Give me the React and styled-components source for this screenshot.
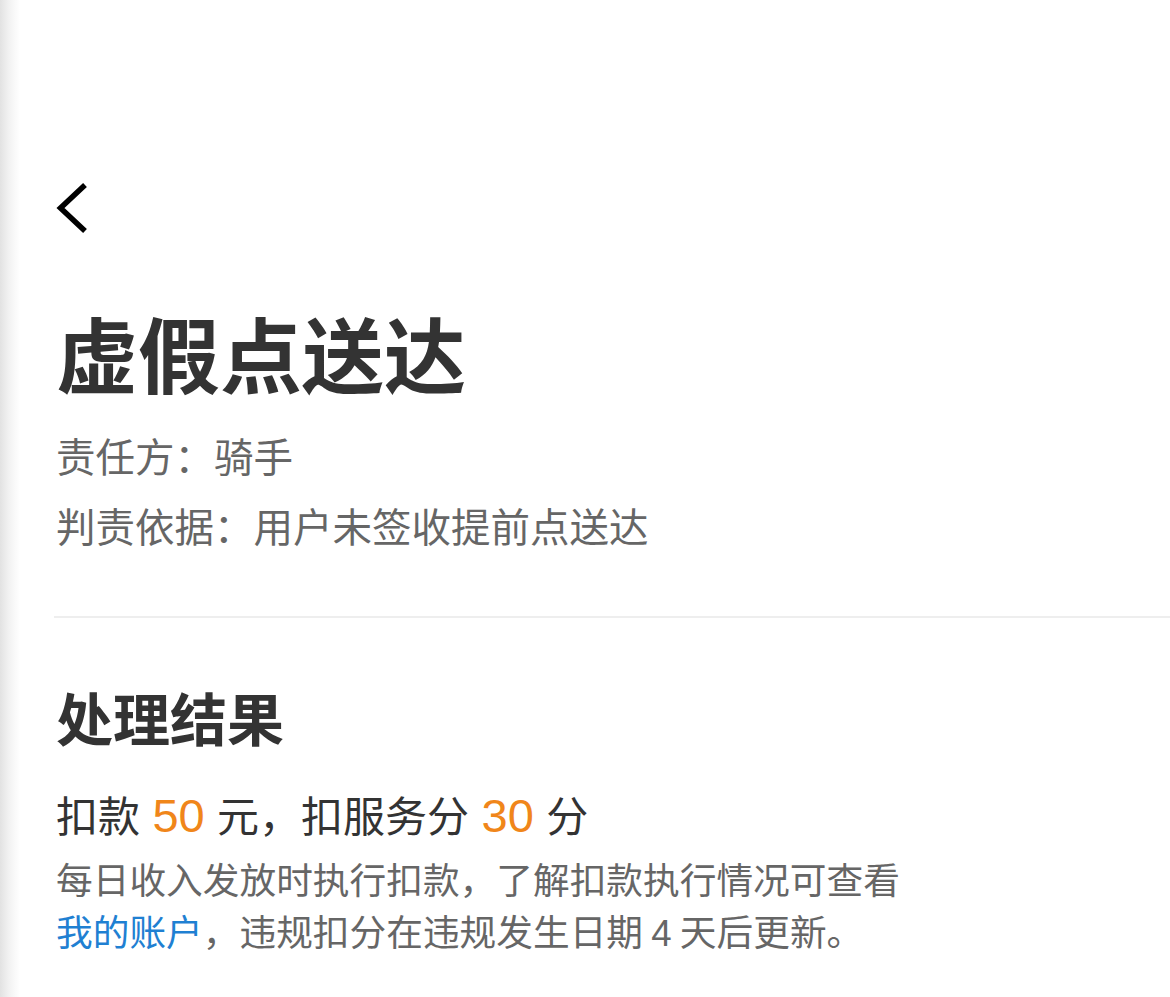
import React from 'react';
import styled, { createGlobalStyle } from 'styled-components';

const GlobalStyle = createGlobalStyle`
  html, body {
    margin: 0;
    padding: 0;
    background: #fff;
  }
  body {
    font-family: "Noto Sans CJK SC", "Noto Sans", sans-serif;
  }
`;

const Page = styled.div`
  width: 1170px;
  min-height: 997px;
  box-sizing: border-box;
  padding: 183px 0 0 56px;
  background: linear-gradient(to right, #e2e2e2 0px, #f2f2f2 9px, #fff 20px);
`;

const BackButton = styled.button`
  display: block;
  width: 32px;
  height: 50px;
  padding: 0;
  border: 0;
  background: none;
  cursor: pointer;
`;

const Title = styled.h1`
  margin: 78px 0 0;
  font-size: 82px;
  line-height: 82px;
  font-weight: 700;
  color: #333;
`;

const InfoList = styled.div`
  margin-top: 38px;
  display: flex;
  flex-direction: column;
  gap: 22px;
`;

const InfoRow = styled.div`
  font-size: 39.5px;
  line-height: 48px;
  color: #666;
`;

const Divider = styled.hr`
  margin: 67px 0 0 -2px;
  border: 0;
  height: 2px;
  background: #eeeeee;
`;

const SectionTitle = styled.h2`
  margin: 68px 0 0;
  font-size: 57px;
  line-height: 60px;
  font-weight: 700;
  color: #333;
`;

const Summary = styled.div`
  margin-top: 44px;
  font-size: 42px;
  line-height: 48px;
  color: #333;
`;

const Highlight = styled.span`
  margin: 0 3px;
  font-size: 47px;
  color: #f0861a;
  font-family: "Liberation Sans", Arial, sans-serif;
`;

const Note = styled.p`
  margin: 12px 0 0;
  width: 880px;
  font-size: 36.7px;
  line-height: 52px;
  color: #666;
`;

const Link = styled.a`
  color: #1f80d2;
  text-decoration: none;
`;

const Digit = styled.span`
  font-family: "Liberation Sans", Arial, sans-serif;
`;

function ChevronLeft() {
  return (
    <svg width="32" height="50" viewBox="0 0 32 50">
      <path d="M29 2 L4.5 25 L29 48" fill="none" stroke="#000" strokeWidth="5.5" strokeLinecap="butt" strokeLinejoin="miter" />
    </svg>
  );
}

export default function App() {
  return (
    <>
      <GlobalStyle />
      <Page>
        <BackButton aria-label="返回">
          <ChevronLeft />
        </BackButton>
        <Title>虚假点送达</Title>
        <InfoList>
          <InfoRow>责任方：骑手</InfoRow>
          <InfoRow>判责依据：用户未签收提前点送达</InfoRow>
        </InfoList>
        <Divider />
        <SectionTitle>处理结果</SectionTitle>
        <Summary>
          扣款 <Highlight>50</Highlight> 元，扣服务分 <Highlight>30</Highlight> 分
        </Summary>
        <Note>
          每日收入发放时执行扣款，了解扣款执行情况可查看<Link href="#">我的账户</Link>，违规扣分在违规发生日期 <Digit>4</Digit> 天后更新。
        </Note>
      </Page>
    </>
  );
}
